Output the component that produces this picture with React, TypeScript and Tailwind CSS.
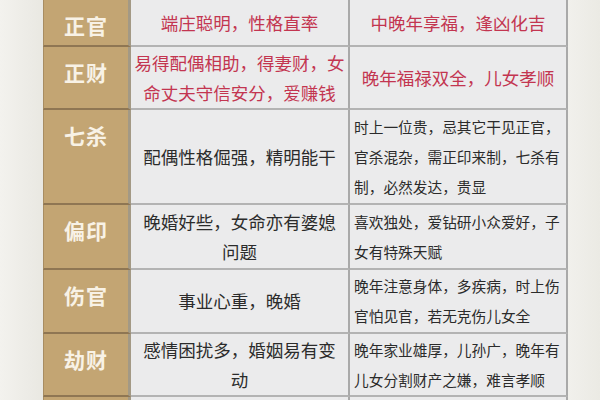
import React from "react";

type Row = {
  h: string;
  name: string;
  c2: string[];
  c2red?: boolean;
  c3: string[];
  c3big?: boolean;
};

const rows: Row[] = [
  { h: "h-[47px]", name: "正官", c2: ["端庄聪明，性格直率"], c2red: true, c3: ["中晚年享福，逢凶化吉"], c3big: true },
  { h: "h-[63px]", name: "正财", c2: ["易得配偶相助，得妻财，女", "命丈夫守信安分，爱赚钱"], c2red: true, c3: ["晚年福禄双全，儿女孝顺"], c3big: true },
  { h: "h-[95px]", name: "七杀", c2: ["配偶性格倔强，精明能干"], c3: ["时上一位贵，忌其它干见正官，", "官杀混杂，需正印来制，七杀有", "制，必然发达，贵显"] },
  { h: "h-[65px]", name: "偏印", c2: ["晚婚好些，女命亦有婆媳", "问题"], c3: ["喜欢独处，爱钻研小众爱好，子", "女有特殊天赋"] },
  { h: "h-[64px]", name: "伤官", c2: ["事业心重，晚婚"], c3: ["晚年注意身体，多疾病，时上伤", "官怕见官，若无克伤儿女全"] },
  { h: "h-[63px]", name: "劫财", c2: ["感情困扰多，婚姻易有变", "动"], c3: ["晚年家业雄厚，儿孙广，晚年有", "儿女分割财产之嫌，难言孝顺"] },
  { h: "h-[60px]", name: "", c2: [], c3: [] },
];

const font = { fontFamily: '"Noto Sans CJK SC", "Noto Sans", sans-serif' };

export default function App() {
  return (
    <div className="w-[600px] h-[400px] overflow-hidden flex bg-[#ecebe6]" style={font}>
      <div className="w-[43px] shrink-0 bg-gradient-to-r from-[#f3f2ee] to-[#e9e8e2]" />
      <div className="w-[525px] shrink-0 flex flex-col">
        {rows.map((r, i) => (
          <div key={i} className={`${r.h} shrink-0 flex`}>
            <div className="w-[88px] shrink-0 bg-[#c3a573] border-l border-l-[#a88d62] border-b-2 border-b-[#8f7653] border-r-[3px] border-r-[#a39985] flex justify-center pt-[10px]">
              <span className="text-[21px] leading-[30px] font-bold text-[#f8f2e6] tracking-[1px]">{r.name}</span>
            </div>
            <div className={`w-[219px] shrink-0 bg-[#ebebec] border-b-2 border-b-[#b3b3b3] border-r-2 border-r-[#a9a9a9] flex flex-col justify-center items-center text-[17.5px] leading-[30px] ${r.c2red ? "text-[#c33550]" : "text-[#2b2b2b]"}`}>
              {r.c2.map((l, j) => (
                <span key={j} className="whitespace-nowrap">{l}</span>
              ))}
            </div>
            <div className={`w-[218px] shrink-0 bg-[#ebebec] border-b-2 border-b-[#b3b3b3] border-r-2 border-r-[#a9a9a9] flex flex-col justify-center ${r.c3big ? "items-center text-[17.5px] leading-[30px] text-[#c33550]" : "items-start pl-[4px] text-[14.7px] leading-[30px] text-[#2b2b2b]"}`}>
              {r.c3.map((l, j) => (
                <span key={j} className="whitespace-nowrap">{l}</span>
              ))}
            </div>
          </div>
        ))}
      </div>
      <div className="flex-1 bg-gradient-to-r from-[#f1f0ec] to-[#ebeae4]" />
    </div>
  );
}
